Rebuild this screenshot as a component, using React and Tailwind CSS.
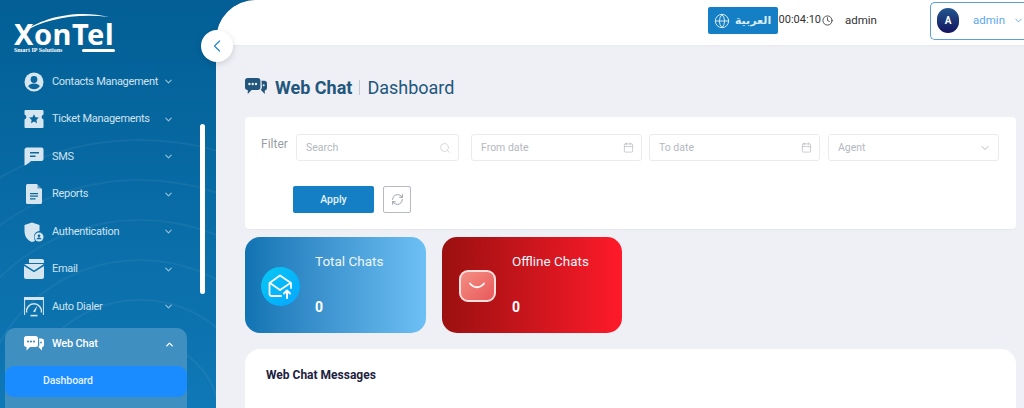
import React from "react";
import { ChevronDown, ChevronUp, ChevronLeft, Search, Calendar, RefreshCw, Globe, Clock } from "lucide-react";

const font = { fontFamily: 'Roboto, "Noto Sans", sans-serif' };

function ContactIcon() {
  return (
    <svg width="20" height="20" viewBox="0 0 20 20">
      <circle cx="10" cy="10" r="9.5" fill="#d5e6f1" />
      <circle cx="10" cy="7.5" r="3.4" fill="#0b669d" />
      <path d="M4.2 14.2c1-2 3-2.8 5.8-2.8s4.8.8 5.8 2.8c-1.4 2-3.4 3-5.8 3s-4.4-1-5.8-3z" fill="#0b669d" />
    </svg>
  );
}

function TicketIcon() {
  return (
    <svg width="20" height="20" viewBox="0 0 20 20">
      <path d="M1.5 1h17a1 1 0 0 1 1 1v3.6a2.6 2.6 0 0 0 0 5V18a1 1 0 0 1-1 1h-17a1 1 0 0 1-1-1v-7.4a2.6 2.6 0 0 0 0-5V2a1 1 0 0 1 1-1z" fill="#d5e6f1" />
      <path d="M10 5.2l1.5 3 3.3.4-2.4 2.3.6 3.3-3-1.6-3 1.6.6-3.3-2.4-2.3 3.3-.4z" fill="#0b669d" />
    </svg>
  );
}

function SmsIcon() {
  return (
    <svg width="20" height="20" viewBox="0 0 20 20">
      <path d="M3 .5h14.5a2 2 0 0 1 2 2V12a2 2 0 0 1-2 2H7c-2 1.6-4 3.4-6 4.5-.3 0-.5-.2-.5-.5V3a2.5 2.5 0 0 1 2.5-2.5z" fill="#d5e6f1" />
      <path d="M6 5h9v1.6H6zM6 8.4h5.5V10H6z" fill="#0b669d" />
    </svg>
  );
}

function ReportIcon() {
  return (
    <svg width="20" height="20" viewBox="0 0 20 20">
      <path d="M3.5 0H13l5 5v13.5a1.5 1.5 0 0 1-1.5 1.5h-13A1.5 1.5 0 0 1 2 18.5v-17A1.5 1.5 0 0 1 3.5 0z" fill="#d5e6f1" />
      <path d="M13.5 0L18 4.5h-4.5z" fill="#0b669d" opacity="0.6" />
      <path d="M6 9h8v1.2H6zM6 11.6h8v1.2H6zM6 14.2h5.5v1.2H6z" fill="#0b669d" />
    </svg>
  );
}

function AuthIcon() {
  return (
    <svg width="20" height="20" viewBox="0 0 20 20">
      <path d="M8 .5l7.5 2.6v6C11 9.5 8.5 13.5 11 19c-.8.5-1.8.8-3 1C3 18 .5 14 .5 9V3.1z" fill="#d5e6f1" />
      <circle cx="15" cy="15" r="4.5" fill="#d5e6f1" />
      <circle cx="15" cy="13.8" r="1.3" fill="#0b669d" />
      <path d="M12.5 17.3c.4-1.3 1.3-1.8 2.5-1.8s2.1.5 2.5 1.8z" fill="#0b669d" />
    </svg>
  );
}

function EmailIcon() {
  return (
    <svg width="20" height="20" viewBox="0 0 20 20">
      <path d="M5 0h13a2 2 0 0 1 2 2v2H5z" fill="#d5e6f1" />
      <path d="M1 5h18a1 1 0 0 1 .6.3L10 11.5.4 5.3A1 1 0 0 1 1 5z" fill="#d5e6f1" />
      <path d="M0 7l10 6.3L20 7v11a2 2 0 0 1-2 2H2a2 2 0 0 1-2-2z" fill="#d5e6f1" />
    </svg>
  );
}

function DialerIcon() {
  return (
    <svg width="20" height="20" viewBox="0 0 20 20" fill="none">
      <path d="M0 0h20v3H0z" fill="#d5e6f1" />
      <path d="M.6 3v15M19.4 3v15" stroke="#d5e6f1" strokeWidth="1" />
      <path d="M2.6 15.5a7.5 7.5 0 1 1 14.8 0" stroke="#d5e6f1" strokeWidth="1.5" />
      <path d="M9 14.5L13.5 8.5l-2.3 6.8z" fill="#d5e6f1" />
      <path d="M6.5 18.6h7" stroke="#d5e6f1" strokeWidth="1.6" />
    </svg>
  );
}

function ChatIcon({ color = "#ffffff", hole = "#3d8dbf", width = 20 }) {
  return (
    <svg width={width} height={width * 0.8} viewBox="0 0 20 16">
      <path d="M2.5 0h9A2.5 2.5 0 0 1 14 2.5v6A2.5 2.5 0 0 1 11.5 11H6l-3.5 3.5V11A2.5 2.5 0 0 1 0 8.5v-6A2.5 2.5 0 0 1 2.5 0z" fill={color} />
      <path d="M15 2.5h2.5A2.5 2.5 0 0 1 20 5v4a2.5 2.5 0 0 1-2 2.4V14.5l-3.5-3.5h-.5c1-.6 1.4-1.500 1.400-2.500z" fill={color} />
      <circle cx="4" cy="5.5" r="1.1" fill={hole} />
      <circle cx="7" cy="5.5" r="1.1" fill={hole} />
      <circle cx="10" cy="5.5" r="1.1" fill={hole} />
      <circle cx="17" cy="6.5" r="0.9" fill={hole} />
    </svg>
  );
}

const navItems = [
  { label: "Contacts Management", icon: <ContactIcon /> },
  { label: "Ticket Managements", icon: <TicketIcon /> },
  { label: "SMS", icon: <SmsIcon /> },
  { label: "Reports", icon: <ReportIcon /> },
  { label: "Authentication", icon: <AuthIcon /> },
  { label: "Email", icon: <EmailIcon /> },
  { label: "Auto Dialer", icon: <DialerIcon /> },
];

function Logo() {
  return (
    <div className="relative h-[46px] w-[110px] text-white">
      <svg className="absolute left-[14px] top-[11px]" width="96" height="22" viewBox="0 0 96 22" fill="none">
        <path d="M8 22C26 7 62-2 95 6 62 2 30 8 8 22z" fill="#ffffff" />
      </svg>
      <span className="absolute left-[14px] top-[22px] text-[29px] leading-[24px] font-bold tracking-[0.5px]" style={{ fontFamily: '"Noto Sans", sans-serif' }}>
        XonTel
      </span>
      <span className="absolute left-[14px] top-[47px] text-[6px] leading-[6px] font-bold whitespace-nowrap" style={{ fontFamily: '"Liberation Serif", serif' }}>
        Smart IP Solutions
      </span>
      <span className="absolute left-[82px] top-[49px] h-[3px] w-[33px] rounded-full bg-white" />
    </div>
  );
}

function Sidebar() {
  return (
    <aside className="relative w-[216px] shrink-0 overflow-hidden bg-gradient-to-b from-[#035f95] to-[#0f78b6]">
      <svg className="absolute left-0 top-0" width="216" height="408" viewBox="0 0 216 408" fill="none" stroke="#ffffff" strokeOpacity="0.05" strokeWidth="2">
        <circle cx="140" cy="420" r="40" />
        <circle cx="140" cy="420" r="80" />
        <circle cx="140" cy="420" r="120" />
        <circle cx="140" cy="420" r="160" />
        <circle cx="140" cy="420" r="200" />
        <circle cx="140" cy="420" r="240" />
        <circle cx="140" cy="420" r="280" />
      </svg>

      <div className="relative flex flex-col">
        <Logo />
        <ul className="mt-[17px] flex flex-col text-[#cfe3f0]">
          {navItems.map((item) => (
            <li key={item.label} className="flex h-[37.5px] items-center pl-[24px] pr-[42px]">
              <span className="flex w-[20px] justify-center">{item.icon}</span>
              <span className="ml-[8px] flex-1 text-[11px] tracking-[-0.3px] whitespace-nowrap">{item.label}</span>
              <ChevronDown size={11} strokeWidth={2.2} className="text-[#9cc5dd]" />
            </li>
          ))}
        </ul>
        <div className="mx-[5px] mt-[2px] w-[182px] rounded-t-[10px] bg-[#3f8fc0] pb-[20px]">
          <div className="flex h-[38px] items-center pb-[5px] pl-[19px] pr-[12px] text-white">
            <ChatIcon />
            <span className="ml-[8px] flex-1 text-[11px] font-medium tracking-[-0.2px]">Web Chat</span>
            <ChevronUp size={11} strokeWidth={3} />
          </div>
          <div className="flex h-[31px] items-center rounded-[9px] bg-[#1a8cff] pl-[38px] text-[10.5px] font-medium tracking-[-0.1px] text-[#e6f2ff]">
            Dashboard
          </div>
        </div>
      </div>

      <div className="absolute left-[200px] top-[124px] h-[170px] w-[5px] rounded-full bg-white" />
    </aside>
  );
}

function Topbar() {
  return (
    <header className="flex h-[45px] shrink-0 items-center justify-end rounded-tl-[40px] bg-white pb-[4px] shadow-[0_1px_2px_rgba(0,0,0,0.03)]">
      <button className="flex h-[27px] w-[70px] items-center justify-center gap-[5px] rounded-[2px] bg-[#147fc4] text-[#d9ecf8]">
        <Globe size={16} strokeWidth={1.5} />
        <span className="text-[11px] font-bold" style={{ fontFamily: '"Noto Sans", "DejaVu Sans", sans-serif' }}>العربية</span>
      </button>
      <span className="ml-[1px] text-[11px] text-[#333]">00:04:10</span>
      <Clock size={11} strokeWidth={1.8} className="ml-[1px] text-[#333]" />
      <span className="ml-[12px] w-[85px] text-[11.5px] text-[#333]">admin</span>
      <div className="flex h-[38px] w-[94px] items-center rounded-l-[5px] border border-r-0 border-[#5c9fd0] pl-[6px]">
        <span className="flex h-[25px] w-[25px] items-center justify-center rounded-full bg-gradient-to-b from-[#23568f] to-[#15125f] text-[10px] font-bold text-white">
          A
        </span>
        <span className="ml-[14px] text-[11.5px] text-[#5ba7ee]">admin</span>
        <ChevronDown size={11} className="ml-[8px] shrink-0 text-[#5ba7ee]" />
      </div>
    </header>
  );
}

function Field({ placeholder, icon, className }) {
  return (
    <div className={`flex h-[27px] items-center justify-between rounded-[3px] border border-[#e9ebef] pl-[9px] pr-[7px] text-[10.5px] text-[#b4b8bf] ${className}`}>
      <span>{placeholder}</span>
      {icon}
    </div>
  );
}

function FilterCard() {
  return (
    <section className="ml-[29px] mr-[8px] mt-[18px] h-[112px] rounded-[4px] bg-white pl-[16px] pr-[16px] pt-[17px] shadow-[0_1px_1px_rgba(0,0,0,0.04)]">
      <div className="flex">
        <span className="mt-[1px] w-[35px] text-[12px] text-[#9a9ea6]">Filter</span>
        <div className="flex gap-[12px]">
          <Field placeholder="Search" className="w-[163px]" icon={<Search size={12} className="text-[#d8dadf]" />} />
          <Field placeholder="From date" className="w-[171px]" icon={<Calendar size={11} strokeWidth={1.5} className="text-[#b4b8bf]" />} />
        </div>
        <div className="ml-[7px] flex gap-[8px]">
          <Field placeholder="To date" className="w-[171px]" icon={<Calendar size={11} strokeWidth={1.5} className="text-[#b4b8bf]" />} />
          <Field placeholder="Agent" className="w-[171px]" icon={<ChevronDown size={12} className="text-[#b4b8bf]" />} />
        </div>
      </div>
      <div className="ml-[32px] mt-[25px] flex gap-[9px]">
        <button className="h-[27px] w-[81px] rounded-[2px] bg-[#147fc4] text-[10.5px] font-medium text-[#e6f2fa]">Apply</button>
        <button className="flex h-[27px] w-[28px] items-center justify-center rounded-[2px] border border-[#b5bac6] text-[#8b909c]">
          <RefreshCw size={13} strokeWidth={1.5} />
        </button>
      </div>
    </section>
  );
}

function StatCard({ title, gradient, icon, className }) {
  return (
    <div className={`flex h-[96px] rounded-[15px] text-white ${gradient} ${className}`}>
      <div className="flex w-[70px] shrink-0 items-center justify-center pt-[2px]">{icon}</div>
      <div className="flex flex-col pt-[15px]">
        <span className="text-[13.5px] leading-[18px] text-[#eef6fb]">{title}</span>
        <span className="mt-[27px] text-[14px] leading-[20px] font-bold">0</span>
      </div>
    </div>
  );
}

function StatCards() {
  return (
    <div className="ml-[29px] mt-[8px] flex gap-[16px]">
      <StatCard
        title="Total Chats"
        gradient="bg-gradient-to-r from-[#0f73b2] to-[#6cc0f5]"
        className="w-[181px]"
        icon={
          <span className="flex h-[39px] w-[39px] items-center justify-center rounded-full bg-gradient-to-br from-[#0cc8f2] to-[#0aa5ff]">
            <svg width="28" height="28" viewBox="0 0 28 28" fill="none" stroke="#ffffff" strokeWidth="1.8" strokeLinejoin="round" strokeLinecap="round">
              <path d="M15 24H5.5A2 2 0 0 1 3.5 22V11L14 3.5 25 11v5" />
              <path d="M4 11l10 7 10.5-7" />
              <path d="M21 26v-7M18 21.5l3-3 3 3" strokeWidth="2" />
            </svg>
          </span>
        }
      />
      <StatCard
        title="Offline Chats"
        gradient="bg-gradient-to-r from-[#9b1010] to-[#ff1a2a]"
        className="w-[180px]"
        icon={
          <span className="flex h-[32px] w-[37px] items-center justify-center rounded-[9px] border-2 border-[#fbe0de] bg-gradient-to-br from-[#f38e84] to-[#e8585a]">
            <svg width="18" height="8" viewBox="0 0 18 8" fill="none" stroke="#ffffff" strokeWidth="1.8" strokeLinecap="round">
              <path d="M2 1.5c4 5 10 5 14 0" />
            </svg>
          </span>
        }
      />
    </div>
  );
}

export default function App() {
  return (
    <div className="relative flex h-[408px] w-[1024px] overflow-hidden bg-[#035f95]" style={font}>
      <Sidebar />
      <main className="flex min-w-0 flex-1 flex-col overflow-hidden rounded-tl-[40px] bg-[#eef0f5]">
        <Topbar />
        <div className="ml-[29px] mt-[30px] flex h-[24px] items-center text-[#23567c]">
          <ChatIcon color="#23567c" hole="#eef0f5" width={22} />
          <span className="ml-[8px] text-[18px] font-bold">Web Chat</span>
          <span className="mx-[7px] h-[15px] w-px bg-[#c4c9d0]" />
          <span className="text-[18px]">Dashboard</span>
        </div>
        <FilterCard />
        <StatCards />
        <section className="ml-[29px] mr-[8px] mt-[16px] flex-1 rounded-t-[15px] bg-white pl-[21px] pt-[17px]">
          <h2 className="text-[12px] font-bold text-[#1d2240]">Web Chat Messages</h2>
        </section>
      </main>
      <button className="absolute left-[201px] top-[30px] flex h-[32px] w-[32px] items-center justify-center rounded-full bg-white text-[#2f86cc] shadow-[0_2px_6px_rgba(0,0,0,0.15)]">
        <ChevronLeft size={20} strokeWidth={1.5} />
      </button>
    </div>
  );
}
